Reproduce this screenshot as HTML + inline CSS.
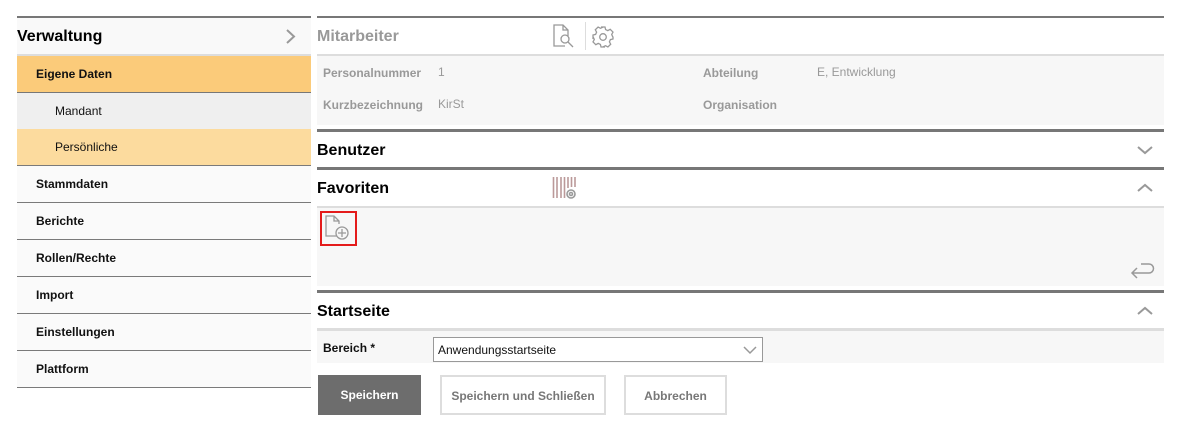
<!DOCTYPE html>
<html><head><meta charset="utf-8"><style>
*{margin:0;padding:0;box-sizing:border-box}
body{width:1180px;height:427px;background:#fff;font-family:"Liberation Sans",Arial,sans-serif;position:relative;overflow:hidden}
.a{position:absolute}
.side{left:17px;width:294px}
.nav{position:absolute;left:17px;width:294px;height:37px;border-bottom:1px solid #7a7a7a;font-size:12px;font-weight:bold;color:#111;padding-left:19px;line-height:36px;background:#fafafa}
.m{left:317px;width:847px}
.h{position:absolute;left:317px;width:847px;font-size:16px;font-weight:bold;color:#000;line-height:38px}
.lbl{position:absolute;font-size:12px;font-weight:bold;color:#999}
.val{position:absolute;font-size:12px;color:#999}
.btn{position:absolute;top:375px;height:40px;font-size:12px;font-weight:bold;text-align:center;line-height:38px}
</style></head><body>
<!-- sidebar -->
<div class="a side" style="top:16px;height:2px;background:#777"></div>
<div class="a side" style="top:18px;height:36px;background:#f9f9f9;font-size:16px;font-weight:bold;line-height:38px">Verwaltung
<svg class="a" style="left:268px;top:11px" width="12" height="15"><path d="M2 1 L9 7.5 L2 14" stroke="#999" stroke-width="2" fill="none"/></svg></div>
<div class="a side" style="top:54px;height:2px;background:#ddd"></div>
<div class="nav" style="top:56px;background:#fbcb7a;border-bottom:1px solid #777">Eigene Daten</div>
<div class="nav" style="top:93px;height:36px;background:#efefef;border:none;font-weight:normal;padding-left:38px;line-height:36px">Mandant</div>
<div class="nav" style="top:129px;height:37px;background:#fcdb9e;font-weight:normal;padding-left:38px">Persönliche</div>
<div class="nav" style="top:166px">Stammdaten</div>
<div class="nav" style="top:203px">Berichte</div>
<div class="nav" style="top:240px">Rollen/Rechte</div>
<div class="nav" style="top:277px">Import</div>
<div class="nav" style="top:314px">Einstellungen</div>
<div class="nav" style="top:351px">Plattform</div>
<!-- main -->
<div class="a m" style="top:16px;height:2px;background:#777"></div>
<div class="h" style="top:18px;color:#999">Mitarbeiter</div>
<svg class="a" style="left:552px;top:24px" width="24" height="26" fill="none" stroke="#999" stroke-width="1.3"><path d="M13 22H2V1h9l5 5v6M11 1v5h5"/><circle cx="13" cy="15" r="4"/><path d="M16 18l5 5"/></svg>
<div class="a" style="left:585px;top:22px;width:1px;height:28px;background:#ddd"></div>
<svg class="a" style="left:591px;top:25px" width="24" height="24" viewBox="0 0 24 24" fill="none" stroke="#999" stroke-width="1.3"><circle cx="12" cy="12" r="3.3"/><path d="M10 2h4l.6 2.6 2.2 1 2.4-1.3 2.8 2.8-1.3 2.4 1 2.2L22 12v0l0 2-2.6.6-1 2.2 1.3 2.4-2.8 2.8-2.4-1.3-2.2 1L14 22h-4l-.6-2.6-2.2-1-2.4 1.3-2.8-2.8 1.3-2.4-1-2.2L2 14v-4l2.6-.6 1-2.2-1.3-2.4 2.8-2.8 2.4 1.3 2.2-1z"/></svg>
<div class="a m" style="top:54px;height:2px;background:#ddd"></div>
<div class="a m" style="top:56px;height:69px;background:#f7f7f7"></div>
<div class="lbl" style="left:323px;top:66px">Personalnummer</div><div class="val" style="left:438px;top:65px">1</div>
<div class="lbl" style="left:323px;top:98px">Kurzbezeichnung</div><div class="val" style="left:438px;top:97px">KirSt</div>
<div class="lbl" style="left:703px;top:66px">Abteilung</div><div class="val" style="left:817px;top:65px">E, Entwicklung</div>
<div class="lbl" style="left:703px;top:98px">Organisation</div>
<div class="a m" style="top:129px;height:3px;background:#777"></div>
<div class="h" style="top:132px">Benutzer</div>
<svg class="a" style="left:1136px;top:144px" width="18" height="12"><path d="M2 3l7 6 7-6" stroke="#999" stroke-width="2" fill="none"/></svg>
<div class="a m" style="top:167px;height:3px;background:#777"></div>
<div class="h" style="top:170px">Favoriten</div>
<svg class="a" style="left:552px;top:176px" width="26" height="24" fill="none" stroke="#b99" stroke-width="1.6"><path d="M1.5 1v21M5 1v21M9 1v21M12.5 1v21M16 1v11M19.5 1v10M23 1v10"/><circle cx="19" cy="18" r="4" stroke="#999" fill="#fff"/><circle cx="19" cy="18" r="1.5" stroke="#999"/></svg>
<svg class="a" style="left:1136px;top:182px" width="18" height="12"><path d="M2 9l7-6 7 6" stroke="#999" stroke-width="2" fill="none"/></svg>
<div class="a m" style="top:206px;height:2px;background:#ddd"></div>
<div class="a m" style="top:208px;height:78px;background:#f7f7f7"></div>
<div class="a" style="left:320px;top:211px;width:37px;height:35px;border:2px solid #e41b1b"></div>
<svg class="a" style="left:325px;top:215px" width="28" height="28" fill="none" stroke="#999" stroke-width="1.3"><path d="M12 21H1V1h8l5 5v3M9 1v5h5"/><circle cx="17" cy="18" r="6"/><path d="M17 14v8M13 18h8"/></svg>
<svg class="a" style="left:1129px;top:261px" width="26" height="20" fill="none" stroke="#999" stroke-width="1.5"><path d="M12 3h8a4.5 4.5 0 010 9H3M8 7l-5 5 5 5"/></svg>
<div class="a m" style="top:290px;height:3px;background:#777"></div>
<div class="h" style="top:293px">Startseite</div>
<svg class="a" style="left:1136px;top:305px" width="18" height="12"><path d="M2 9l7-6 7 6" stroke="#999" stroke-width="2" fill="none"/></svg>
<div class="a m" style="top:328px;height:3px;background:#ddd"></div>
<div class="a m" style="top:331px;height:32px;background:#f7f7f7"></div>
<div class="a" style="left:323px;top:341px;font-size:12px;font-weight:bold;color:#111">Bereich *</div>
<div class="a" style="left:433px;top:337px;width:330px;height:25px;border:1px solid #999;background:#fff;font-size:12px;line-height:24px;padding-left:4px;color:#111">Anwendungsstartseite
<svg class="a" style="left:309px;top:7px" width="14" height="10"><path d="M1 2l6 6 6-6" stroke="#999" stroke-width="1.5" fill="none"/></svg></div>
<div class="btn" style="left:318px;width:103px;background:#6d6d6d;color:#fff;line-height:40px">Speichern</div>
<div class="btn" style="left:440px;width:166px;border:2px solid #ddd;color:#777">Speichern und Schließen</div>
<div class="btn" style="left:624px;width:103px;border:2px solid #ddd;color:#777">Abbrechen</div>
</body></html>
